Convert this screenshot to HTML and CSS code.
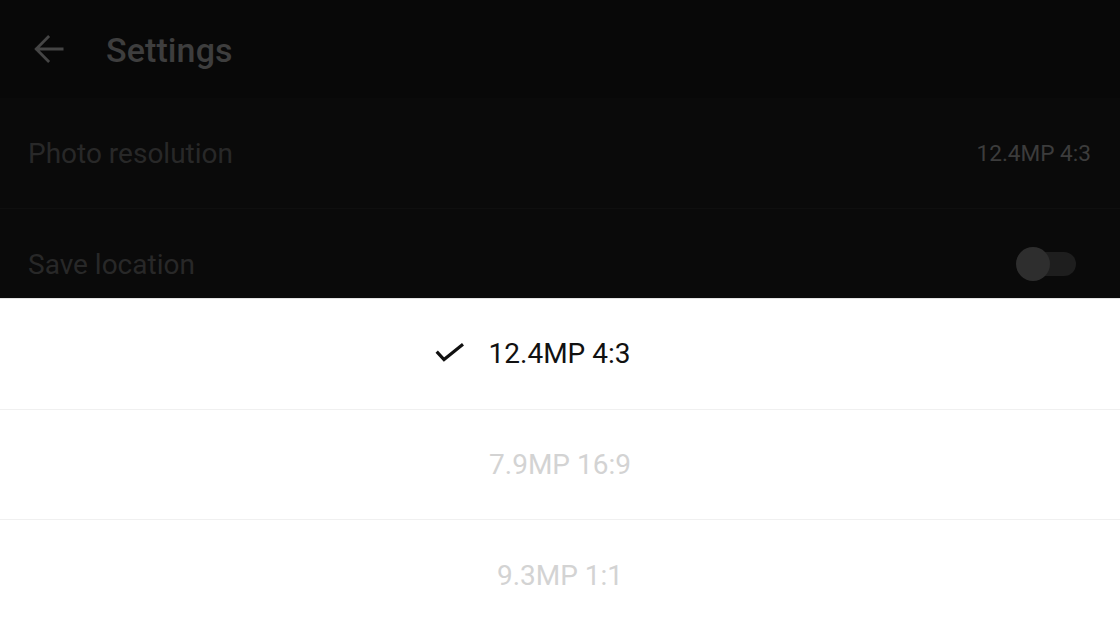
FILE: index.html
```html
<!DOCTYPE html>
<html>
<head>
<meta charset="utf-8">
<link rel="stylesheet" href="styles.css">
</head>
<body>
<div class="screen">
  <header class="topbar">
    <svg class="back" width="42" height="42" viewBox="0 0 24 24"><path d="M19.5 12H5 M11.5 5.2L4.7 12l6.8 6.8" fill="none" stroke="#454545" stroke-width="1.6" stroke-linecap="square"/></svg>
    <h1 class="title">Settings</h1>
  </header>
  <div class="list">
    <div class="row">
      <span class="label">Photo resolution</span>
      <span class="value">12.4MP 4:3</span>
    </div>
    <div class="row">
      <span class="label">Save location</span>
      <span class="toggle"><span class="track"></span><span class="thumb"></span></span>
    </div>
  </div>
  <div class="sheet">
    <div class="option selected">
      <svg class="check" width="30" height="24" viewBox="0 0 30 24"><path d="M2.7 9.7L10 17.5L29 2.3" fill="none" stroke="#111" stroke-width="3.2"/></svg>
      <span>12.4MP 4:3</span>
    </div>
    <div class="option">7.9MP 16:9</div>
    <div class="option">9.3MP 1:1</div>
  </div>
</div>
</body>
</html>
```
FILE: styles.css
```css
html, body { margin: 0; padding: 0; }
body { width: 1120px; height: 630px; overflow: hidden; background: #0a0a0a; font-family: Roboto, "Noto Sans", sans-serif; }
.screen { position: relative; width: 1120px; height: 630px; background: #0a0a0a; }
.topbar { height: 98px; display: flex; align-items: center; background: #080808; }
.back { margin-left: 28px; flex: none; }
.title { margin: 2px 0 0 36px; font-size: 34px; font-weight: 500; color: #3e3e3e; letter-spacing: 0.1px; }
.list { display: flex; flex-direction: column; }
.row { height: 110px; display: flex; align-items: center; justify-content: space-between; padding: 0 29px 0 28px; border-bottom: 1px solid #0f0f0f; }
.label { font-size: 28px; color: #282828; }
.value { font-size: 22.6px; color: #3c3c3c; }
.toggle { position: relative; width: 60px; height: 34px; margin-right: 15px; }
.track { position: absolute; left: 10px; top: 5px; width: 50px; height: 24px; border-radius: 12px; background: #1e1e1e; }
.thumb { position: absolute; left: 0; top: 0; width: 34px; height: 34px; border-radius: 50%; background: #2e2e2e; }
.sheet { position: absolute; left: 0; right: 0; bottom: 0; height: 332px; background: #fff; border-top: 1px solid #e4e4e4; box-sizing: border-box; display: flex; flex-direction: column; }
.option { flex: 1; display: flex; align-items: center; justify-content: center; font-size: 28px; color: #d3d3d3; border-bottom: 1px solid #f0f0f0; }
.option:last-child { border-bottom: none; }
.option.selected { color: #111; gap: 25px; padding-right: 56px; }
.check { flex: none; margin-top: 1px; }
```
